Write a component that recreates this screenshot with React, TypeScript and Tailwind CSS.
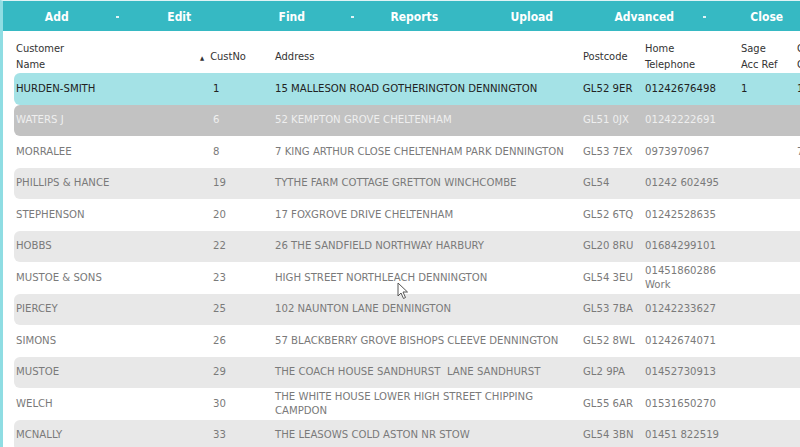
import React from "react";

type Row = {
  name: string;
  no: string;
  addr: string[];
  pc: string;
  tel: string[];
  sage?: string;
  extra?: string;
};

const rows: Row[] = [
  { name: "HURDEN-SMITH", no: "1", addr: ["15 MALLESON ROAD GOTHERINGTON DENNINGTON"], pc: "GL52 9ER", tel: ["01242676498"], sage: "1", extra: "1" },
  { name: "WATERS J", no: "6", addr: ["52 KEMPTON GROVE CHELTENHAM"], pc: "GL51 0JX", tel: ["01242222691"] },
  { name: "MORRALEE", no: "8", addr: ["7 KING ARTHUR CLOSE CHELTENHAM PARK DENNINGTON"], pc: "GL53 7EX", tel: ["0973970967"], extra: "7" },
  { name: "PHILLIPS & HANCE", no: "19", addr: ["TYTHE FARM COTTAGE GRETTON WINCHCOMBE"], pc: "GL54", tel: ["01242 602495"] },
  { name: "STEPHENSON", no: "20", addr: ["17 FOXGROVE DRIVE CHELTENHAM"], pc: "GL52 6TQ", tel: ["01242528635"] },
  { name: "HOBBS", no: "22", addr: ["26 THE SANDFIELD NORTHWAY HARBURY"], pc: "GL20 8RU", tel: ["01684299101"] },
  { name: "MUSTOE & SONS", no: "23", addr: ["HIGH STREET NORTHLEACH DENNINGTON"], pc: "GL54 3EU", tel: ["01451860286", "Work"] },
  { name: "PIERCEY", no: "25", addr: ["102 NAUNTON LANE DENNINGTON"], pc: "GL53 7BA", tel: ["01242233627"] },
  { name: "SIMONS", no: "26", addr: ["57 BLACKBERRY GROVE BISHOPS CLEEVE DENNINGTON"], pc: "GL52 8WL", tel: ["01242674071"] },
  { name: "MUSTOE", no: "29", addr: ["THE COACH HOUSE SANDHURST\u00a0 LANE SANDHURST"], pc: "GL2 9PA", tel: ["01452730913"] },
  { name: "WELCH", no: "30", addr: ["THE WHITE HOUSE LOWER HIGH STREET CHIPPING", "CAMPDON"], pc: "GL55 6AR", tel: ["01531650270"] },
  { name: "MCNALLY", no: "33", addr: ["THE LEASOWS COLD ASTON NR STOW"], pc: "GL54 3BN", tel: ["01451 822519"] },
];

const cols = "grid grid-cols-[195px_62px_308px_62px_96px_56px_40px]";

function ToolButton({ label, drop }: { label: string; drop?: boolean }) {
  return (
    <div className="relative flex w-[117.5px] shrink-0 self-stretch items-center justify-center">
      <span className={drop ? "-ml-[10px]" : ""}>{label}</span>
      {drop && (
        <span className="absolute right-[2px] top-[14px] h-[2px] w-[3px] bg-[#dff4f6]" />
      )}
    </div>
  );
}

export default function App() {
  return (
    <div
      className="relative h-[447px] w-[800px] overflow-hidden bg-white"
      style={{ fontFamily: '"DejaVu Sans Condensed", "DejaVu Sans", sans-serif' }}
    >
      <div className="flex h-full border-l-[3px] border-t-[1px] border-l-[#8fdde3] border-t-[#dff3f5]">
        <div className="flex min-w-0 flex-1 flex-col">
          {/* toolbar */}
          <div className="flex h-[30px] shrink-0 bg-[#36b9c3] pt-[1px] text-[12px] font-bold text-white">
            <ToolButton label="Add" drop />
            <ToolButton label="Edit" />
            <ToolButton label="Find" drop />
            <ToolButton label="Reports" />
            <ToolButton label="Upload" />
            <ToolButton label="Advanced" drop />
            <ToolButton label="Close" />
          </div>

          {/* header */}
          <div className={`${cols} ml-[11px] mt-[10px] h-[32px] shrink-0 items-center text-[11px] leading-[16px] text-[#333]`}>
            <div className="pl-[2px]">
              Customer
              <br />
              Name
            </div>
            <div className="flex items-center">
              <span className="ml-[-9px] mt-[1px] text-[6px] leading-none text-[#333]">▲</span>
              <span className="ml-[6px]">CustNo</span>
            </div>
            <div className="pl-[4px]">Address</div>
            <div className="pl-[4px]">Postcode</div>
            <div className="pl-[4px]">
              Home
              <br />
              Telephone
            </div>
            <div className="pl-[4px]">
              Sage
              <br />
              Acc Ref
            </div>
            <div className="pl-[4px]">
              C
              <br />C
            </div>
          </div>

          {/* rows */}
          <div className="ml-[11px] flex flex-col text-[11.25px] leading-[14px]">
            {rows.map((r, i) => {
              let bg = i % 2 === 1 ? "bg-[#e8e8e8]" : "bg-white";
              let fg = "text-[#7a7a7a]";
              if (i === 0) {
                bg = "bg-[#a4e2e6]";
                fg = "text-[#222]";
              } else if (i === 1) {
                bg = "bg-[#c2c2c2]";
                fg = "text-[#efefef]";
              }
              return (
                <div
                  key={i}
                  className={`${cols} h-[31.5px] shrink-0 items-center rounded-l-[6px] ${bg} ${fg}`}
                >
                  <div className="pl-[2px]">{r.name}</div>
                  <div className="pl-[4px]">{r.no}</div>
                  <div className="pl-[4px]">
                    {r.addr.map((a, j) => (
                      <div key={j} className="whitespace-pre">{a}</div>
                    ))}
                  </div>
                  <div className="pl-[4px]">{r.pc}</div>
                  <div className="pl-[4px]">
                    {r.tel.map((t, j) => (
                      <div key={j}>{t}</div>
                    ))}
                  </div>
                  <div className="pl-[4px]">{r.sage ?? ""}</div>
                  <div className="pl-[4px]">{r.extra ?? ""}</div>
                </div>
              );
            })}
          </div>
        </div>
      </div>

      {/* mouse cursor */}
      <svg
        className="absolute left-[397px] top-[282px]"
        width="12"
        height="18"
        viewBox="0 0 12 18"
      >
        <path
          d="M1 1 L1 14 L4 11 L6.5 16.5 L8.5 15.5 L6 10 L10.5 10 Z"
          fill="#fff"
          stroke="#555"
          strokeWidth="1"
          strokeLinejoin="round"
        />
      </svg>
    </div>
  );
}
